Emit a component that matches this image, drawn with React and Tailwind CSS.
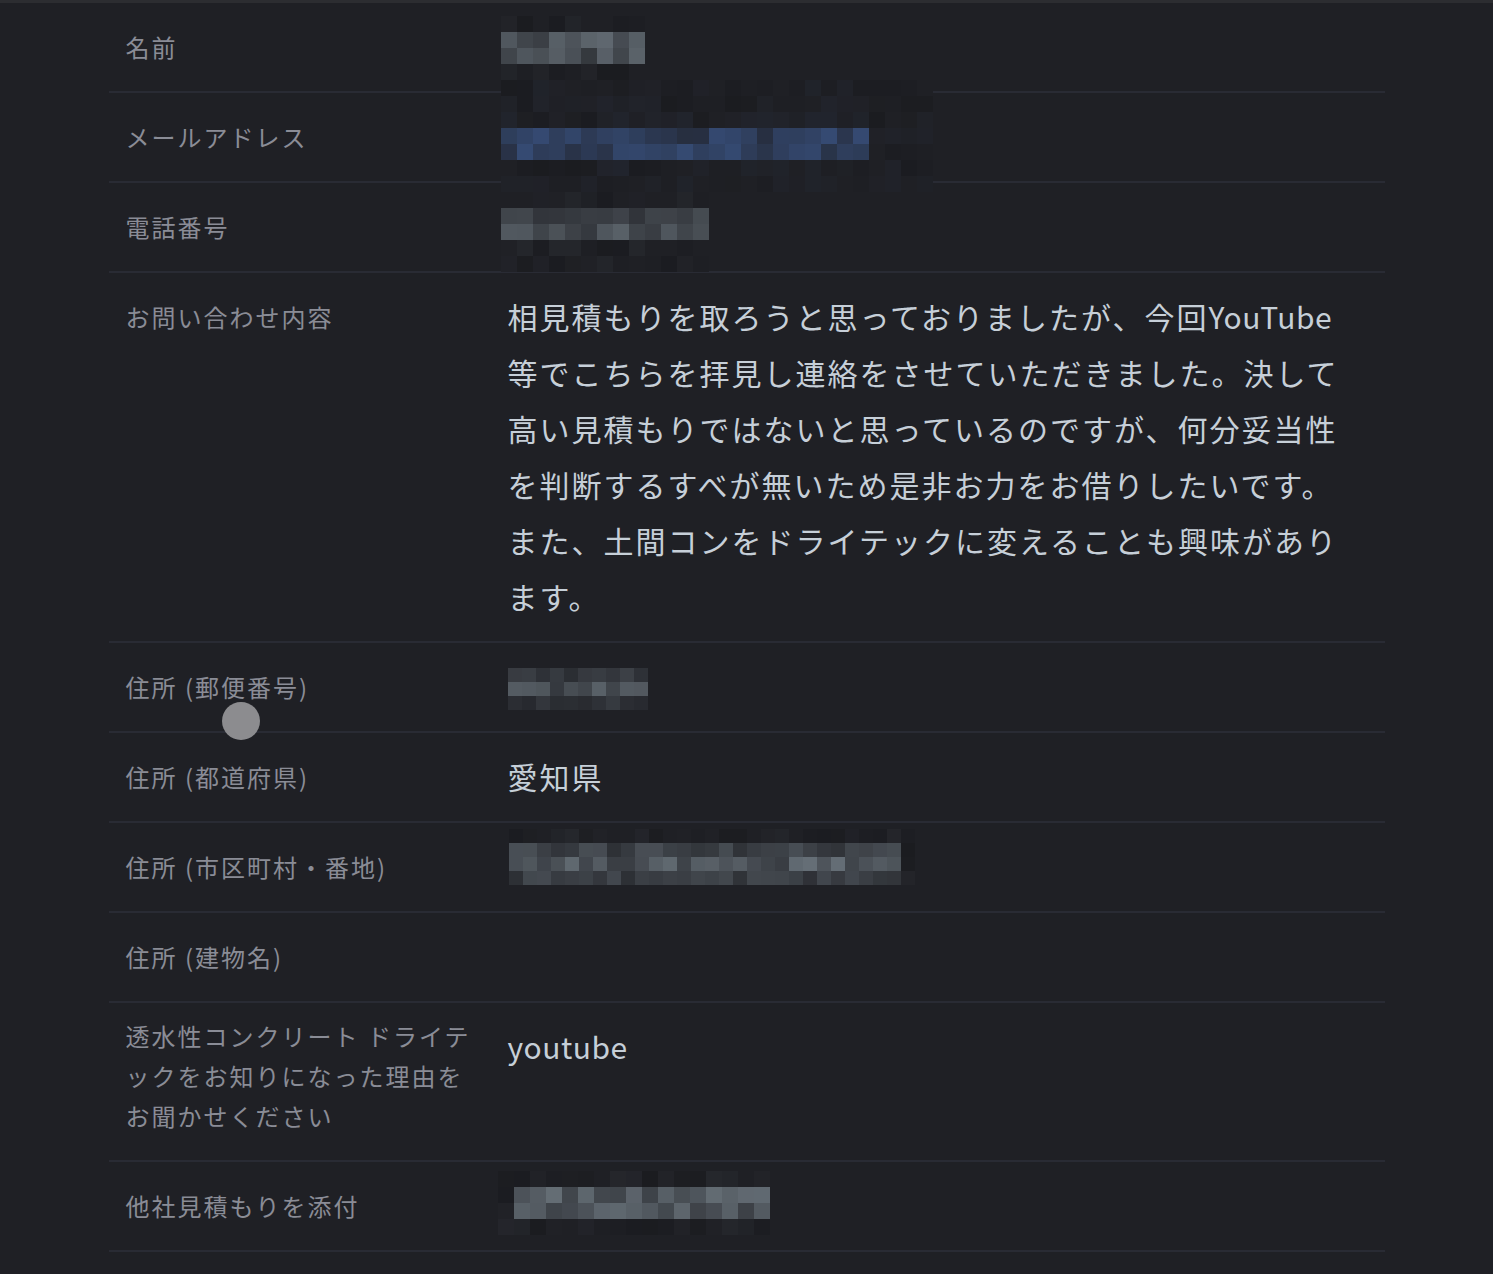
import * as React from 'react';

const BG = [31, 32, 37];
const DARK = [25, 26, 30];
const GRAY = [108, 118, 126];
const BLUE = [54, 76, 118];

const mix = (a, b, t) =>
	`rgb(${a.map((v, i) => Math.round(v + (b[i] - v) * t)).join(',')})`;

const rng = (seed) => () => {
	seed |= 0;
	seed = (seed + 0x6d2b79f5) | 0;
	let t = Math.imul(seed ^ (seed >>> 15), 1 | seed);
	t = (t + Math.imul(t ^ (t >>> 7), 61 | t)) ^ t;
	return ((t ^ (t >>> 14)) >>> 0) / 4294967296;
};

// pixelated redaction block, drawn over the row (it covers the borders too)
const Mosaic = ({ left, top, cell, cols, levels, from = 0, to = cols, tint = GRAY, seed }) => {
	const rnd = rng(seed);
	return (
		<div className="absolute flex flex-col" style={{ left, top }}>
			{levels.map((level, r) => (
				<div key={r} className="flex">
					{Array.from({ length: cols }).map((_, c) => {
						const lv = c < from || c >= to ? Math.min(level, 0.08) : level;
						const v = rnd();
						let bg;
						if (lv < 0.3) {
							bg = v < 0.5 ? mix(BG, DARK, (0.5 - v) * 1.4) : mix(BG, tint, lv * (v - 0.5) * 2);
						} else {
							bg = mix(BG, tint, lv * (0.35 + 0.65 * v));
						}
						return <div key={c} style={{ width: cell, height: cell, background: bg }} />;
					})}
				</div>
			))}
		</div>
	);
};

const Latin = ({ children }) => <span className="tracking-[0.5px]">{children}</span>;

const MESSAGE = [
	<>
		相見積もりを取ろうと思っておりましたが、今回<Latin>YouTube</Latin>
	</>,
	'等でこちらを拝見し連絡をさせていただきました。決して',
	'高い見積もりではないと思っているのですが、何分妥当性',
	'を判断するすべが無いため是非お力をお借りしたいです。',
	'また、土間コンをドライテックに変えることも興味があり',
	'ます。',
];

const ROWS = [
	{
		label: ['名前'],
		mosaic: { left: 392, top: 13, cell: 16, cols: 9, levels: [0.08, 0.9, 0.8, 0.08], seed: 3 },
	},
	{
		label: ['メールアドレス'],
		mosaic: {
			left: 392,
			top: -13,
			cell: 16,
			cols: 27,
			to: 23,
			levels: [0.06, 0.08, 0.1, 0.95, 0.95, 0.1, 0.06],
			tint: BLUE,
			seed: 7,
		},
	},
	{
		label: ['電話番号'],
		mosaic: { left: 392, top: 9, cell: 16, cols: 13, levels: [0.08, 0.55, 0.75, 0.1, 0.06], seed: 11 },
	},
	{ label: ['お問い合わせ内容'], lines: MESSAGE },
	{
		label: ['住所 (郵便番号)'],
		mosaic: { left: 399, top: 25, cell: 14, cols: 10, levels: [0.4, 0.8, 0.3], seed: 5 },
	},
	{ label: ['住所 (都道府県)'], lines: ['愛知県'] },
	{
		label: ['住所 (市区町村・番地)'],
		mosaic: { left: 400, top: 6, cell: 14, cols: 29, to: 28, levels: [0.08, 0.55, 0.95, 0.5], seed: 19 },
	},
	{ label: ['住所 (建物名)'] },
	{
		label: ['透水性コンクリート ドライテ', 'ックをお知りになった理由を', 'お聞かせください'],
		lines: [<Latin>youtube</Latin>],
		tight: true,
	},
	{
		label: ['他社見積もりを添付'],
		mosaic: { left: 389, top: 9, cell: 16, cols: 17, from: 1, levels: [0.08, 0.9, 0.85, 0.08], seed: 23 },
	},
];

const Row = ({ label, lines, mosaic, tight }) => (
	<div className="relative grid grid-cols-[399px_1fr] border-b-2 border-[#292b34]">
		<div
			className={`pl-[17px] pb-6 text-[24px] leading-[40px] tracking-[2px] text-[#8a8c96] ${
				tight ? 'pt-[13px]' : 'pt-6'
			}`}
		>
			{label.map((l) => (
				<div key={l} className="whitespace-pre">
					{l}
				</div>
			))}
		</div>
		<div className="pt-[15px] pb-[17px] text-[30px] leading-[56px] tracking-[2px] text-[#c6cfd8]">
			{(lines || ['\u00a0']).map((l, i) => (
				<div key={i} className="whitespace-nowrap">
					{l}
				</div>
			))}
		</div>
		{mosaic && <Mosaic {...mosaic} />}
	</div>
);

const App = () => (
	<div
		className="relative min-h-screen bg-[#1f2025]"
		style={{ fontFamily: '"Noto Sans CJK JP", "Noto Sans", sans-serif' }}
	>
		<div className="h-[3px] bg-[#2c2d31]" />
		<div className="mx-auto w-[1276px]">
			{ROWS.map((row, i) => (
				<Row key={i} {...row} />
			))}
		</div>
		<div className="absolute left-[222px] top-[702px] h-[38px] w-[38px] rounded-full bg-[#8c8c8f]" />
	</div>
);

export default App;
